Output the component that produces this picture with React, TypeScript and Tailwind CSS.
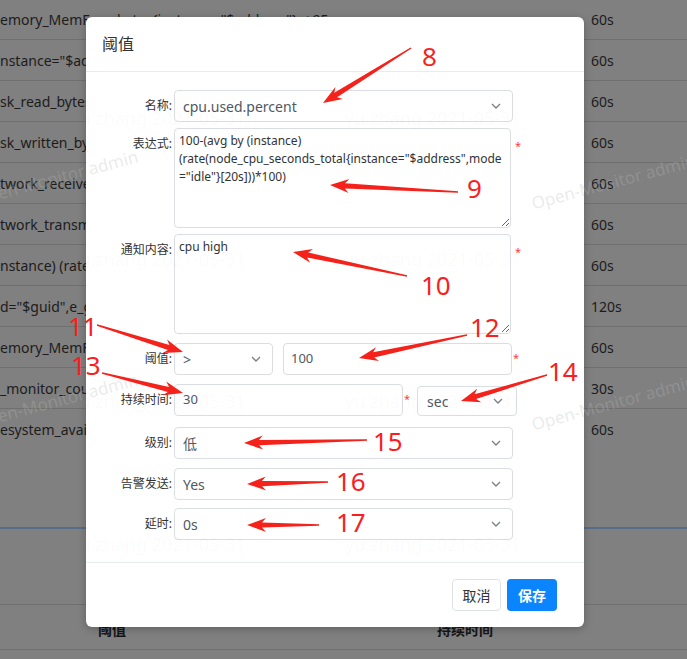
import React from "react";

const FONT = { fontFamily: '"Noto Sans", "Noto Sans CJK SC", sans-serif' };

// rows of the table behind the dialog (already scrolled, so the left text is cut)
const rows: [string, string][] = [
  ['emory_MemFree_bytes{instance="$address"} < 95', "60s"],
  ['nstance="$address"}', "60s"],
  ["sk_read_bytes_total", "60s"],
  ["sk_written_bytes_total", "60s"],
  ["twork_receive_bytes", "60s"],
  ["twork_transmit_bytes", "60s"],
  ["nstance) (rate(node", "60s"],
  ['d="$guid",e_guid', "120s"],
  ["emory_MemFree", "60s"],
  ["_monitor_count", "30s"],
  ["esystem_avail_bytes", "60s"],
];

// annotation arrows: tail x,y -> tip x,y
const arrows: [number, number, number, number][] = [
  [411, 48, 323, 103],
  [458, 192, 330, 185],
  [407, 276, 293, 252],
  [97, 325, 183, 352],
  [467, 335, 359, 358],
  [102, 373, 183, 393],
  [547, 375, 461, 401],
  [367, 440, 244, 443],
  [328, 482, 247, 484],
  [319, 525, 247, 525],
];

const labels: [string, number, number][] = [
  ["8", 422, 57],
  ["9", 467, 189],
  ["10", 421, 286],
  ["11", 68, 327],
  ["12", 470, 328],
  ["13", 71, 366],
  ["14", 548, 372],
  ["15", 373, 442],
  ["16", 336, 482],
  ["17", 336, 523],
];

function arrowPoints(x1: number, y1: number, x2: number, y2: number) {
  const len = Math.hypot(x2 - x1, y2 - y1);
  const dx = (x2 - x1) / len;
  const dy = (y2 - y1) / len;
  const nx = -dy;
  const ny = dx;
  const p = (bx: number, by: number, d: number, w: number) =>
    `${(bx - dx * d + nx * w).toFixed(1)},${(by - dy * d + ny * w).toFixed(1)}`;
  return [
    p(x1, y1, 0, 0.7),
    p(x2, y2, 15, 2.6),
    p(x2, y2, 19, 7),
    p(x2, y2, 0, 0),
    p(x2, y2, 19, -7),
    p(x2, y2, 15, -2.6),
    p(x1, y1, 0, -0.7),
  ].join(" ");
}

function Chevron() {
  return (
    <svg width="10" height="6" viewBox="0 0 10 6" className="shrink-0">
      <path d="M1 1l4 4 4-4" fill="none" stroke="#7a7f87" strokeWidth="1.3" />
    </svg>
  );
}

function Select({ value, className }: { value: string; className: string }) {
  return (
    <div
      className={`h-[32px] border border-[#dadde2] rounded-[4px] bg-white pl-[8px] pr-[11px] flex items-center justify-between text-[14px] text-[#4f5862] ${className}`}
    >
      <span>{value}</span>
      <Chevron />
    </div>
  );
}

function Input({ value, className }: { value: string; className: string }) {
  return (
    <div
      className={`h-[32px] border border-[#dadde2] rounded-[4px] bg-white pl-[7px] flex items-center text-[13px] text-[#4f5862] ${className}`}
    >
      {value}
    </div>
  );
}

function Star({ className = "" }: { className?: string }) {
  return <span className={`text-[11px] leading-[18px] text-[#ff3b3b] pt-[6px] ${className}`}>*</span>;
}

function Row({ label, className = "", children }: { label: string; className?: string; children: React.ReactNode }) {
  return (
    <div className={`flex items-start ${className}`}>
      <div className="w-[86px] shrink-0 text-right text-[12px] leading-[18px] pt-[7px] text-[#333]">{label}</div>
      <div className="ml-[2px] flex items-start">{children}</div>
    </div>
  );
}

function Textarea({ value }: { value: string }) {
  return (
    <textarea
      readOnly
      value={value}
      className="w-[337px] h-[100px] border border-[#dadde2] rounded-[4px] px-[4px] pt-[3px] text-[12px] leading-[18px] text-[#333] whitespace-pre overflow-hidden outline-none"
      style={FONT}
    />
  );
}

export default function App() {
  return (
    <div className="relative w-[687px] h-[659px] overflow-hidden bg-[#808080]" style={FONT}>
      {/* page behind the backdrop */}
      <div className="-mt-px">
        {rows.map(([expr, dur], i) => (
          <div
            key={i}
            className={`h-[41px] flex items-center text-[14px] text-[#1c1c1c] ${i < rows.length - 1 ? "border-b border-[#6f6f6f]" : ""}`}
          >
            <div className="w-[591px] whitespace-nowrap overflow-hidden">{expr}</div>
            <div>{dur}</div>
          </div>
        ))}
        <div className="mt-[77px] h-[2px] bg-[#566e8b]" />
        <div className="h-[75px]" />
        <div className="h-[46px] border-t border-b border-[#6f6f6f] flex items-center pt-[5px] text-[14px] font-bold text-[#151515]">
          <div className="w-[437px] pl-[98px]">阈值</div>
          <div>持续时间</div>
        </div>
      </div>

      {/* dialog */}
      <div className="absolute left-[86px] top-[17px] w-[498px] bg-white rounded-[6px] shadow-[0_2px_8px_rgba(0,0,0,0.25)]">
        <div className="h-[55px] border-b border-[#e9ecef] pl-[16px] flex items-center text-[16px] text-[#333]">阈值</div>
        <div className="pt-[18px] pb-[22px]">
          <Row label="名称:">
            <Select value="cpu.used.percent" className="w-[339px]" />
          </Row>
          <Row label="表达式:" className="mt-[6px]">
            <Textarea
              value={'100-(avg by (instance)\n(rate(node_cpu_seconds_total{instance="$address",mode\n="idle"}[20s]))*100)'}
            />
            <Star className="ml-[4px] pt-[9px]" />
          </Row>
          <Row label="通知内容:" className="mt-[6px]">
            <Textarea value="cpu high" />
            <Star className="ml-[4px] pt-[9px]" />
          </Row>
          <Row label="阈值:" className="mt-[9px]">
            <Select value=">" className="w-[99px]" />
            <Input value="100" className="w-[229px] ml-[10px]" />
            <Star className="ml-[1px]" />
          </Row>
          <Row label="持续时间:" className="mt-[9px]">
            <Input value="30" className="w-[229px] pl-[8px]" />
            <Star className="ml-[1px]" />
            <Select value="sec" className="w-[100px] !h-[30px] ml-[7px] mt-[2px] pl-[9px] pr-[13px]" />
          </Row>
          <Row label="级别:" className="mt-[11px]">
            <Select value="低" className="w-[339px]" />
          </Row>
          <Row label="告警发送:" className="mt-[9px]">
            <Select value="Yes" className="w-[339px]" />
          </Row>
          <Row label="延时:" className="mt-[8px]">
            <Select value="0s" className="w-[339px]" />
          </Row>
        </div>
        <div className="border-t border-[#e9ecef] pt-[16px] pb-[16px] pr-[27px] flex justify-end">
          <button className="w-[49px] h-[32px] border border-[#dee2e6] rounded-[4px] bg-white text-[14px] text-[#333]">
            取消
          </button>
          <button className="w-[50px] h-[32px] ml-[6px] rounded-[4px] bg-[#0b84ff] text-[14px] font-semibold text-white">
            保存
          </button>
        </div>
      </div>

      {/* watermarks */}
      <div className="absolute inset-0 pointer-events-none">
        {[117, 258, 400, 543].map((y) => (
          <React.Fragment key={y}>
            <div className="absolute left-[70px] text-[18px] text-[rgba(128,128,128,0.04)] whitespace-nowrap" style={{ top: y - 12 }}>
              yu.zhang 2021-05-31
            </div>
            <div className="absolute left-[345px] text-[18px] text-[rgba(128,128,128,0.04)] whitespace-nowrap" style={{ top: y - 12 }}>
              yu.zhang 2021-05-31
            </div>
          </React.Fragment>
        ))}
        {[
          [50, 177],
          [607, 181],
          [50, 400],
          [607, 402],
        ].map(([x, y], i) => (
          <div
            key={i}
            className="absolute text-[17px] text-[rgba(185,185,185,0.3)] whitespace-nowrap -rotate-[15deg]"
            style={{ left: x - 78, top: y - 12 }}
          >
            Open-Monitor admin
          </div>
        ))}
      </div>

      {/* annotations */}
      <svg className="absolute inset-0 pointer-events-none" width="687" height="659">
        {arrows.map(([a, b, c, d], i) => (
          <polygon key={i} points={arrowPoints(a, b, c, d)} fill="#f5221b" />
        ))}
      </svg>
      {labels.map(([t, x, y]) => (
        <div
          key={t}
          className="absolute text-[26px] leading-none text-[#fa1e1e] pointer-events-none"
          style={{ left: x, top: y - 14 }}
        >
          {t}
        </div>
      ))}
    </div>
  );
}
